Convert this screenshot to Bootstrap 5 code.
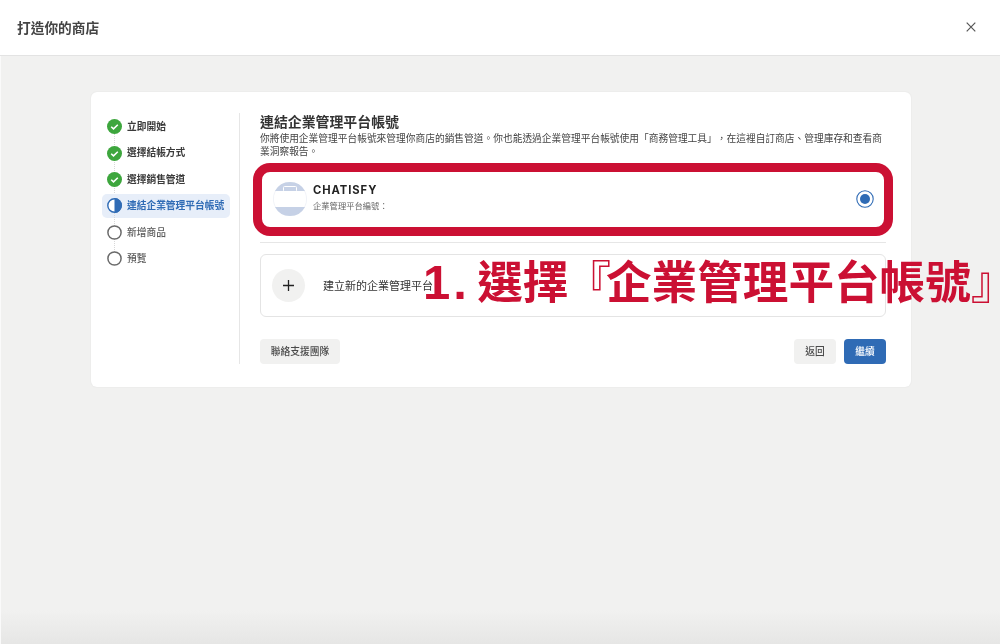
<!DOCTYPE html>
<html lang="zh-Hant">
<head>
<meta charset="utf-8">
<title>打造你的商店</title>
<link href="https://cdn.jsdelivr.net/npm/bootstrap@5.3.0/dist/css/bootstrap.min.css" rel="stylesheet">
<style>
html,body{height:644px;overflow:hidden}
body{font-family:"Noto Sans CJK TC","Liberation Sans",sans-serif;background:#f1f1f0;color:#1c1c1c;font-size:9.73px;line-height:13.5px;text-spacing-trim:space-all}
.page-shell{height:644px;padding-left:1px;background:linear-gradient(#f1f1f0 0,#f1f1f0 610px,#e6e6e5 644px);border-left:1px solid #fafafa;filter:blur(.3px)}
.top-bar{height:56px;background:#fff;border-bottom:1px solid #e3e3e3;margin-left:-2px;padding:0 22px 2px 17px}
.top-title{font-size:13.7px;font-weight:700;color:#444;margin:0;line-height:16px}
.close-x{width:14px;height:14px;display:block}
.store-panel{position:relative;width:820px;height:295px;margin:36px 0 0 89px;background:#fff;border-radius:6px;box-shadow:0 0 2px rgba(0,0,0,.07);padding:21px 25px 23px 11px}
.step-rail{width:138px;border-right:1px solid #e6e6e6;padding:.6px 9px 0 0;flex:none}
.step-item{position:relative;height:26.4px;padding-left:5px;gap:5px;font-weight:700;color:#3a3a3a}
.step-item:not(:last-child)::after{content:"";position:absolute;left:12px;top:20px;height:13px;border-left:1.5px dotted #d8d8d8}
.step-item.step-now{color:#2f6bb5}
.step-item.step-now::before{content:"";position:absolute;left:0;right:0;top:1.2px;bottom:1.2px;background:#e7eef9;border-radius:5px;z-index:0}
.step-item>*{position:relative;z-index:1}
.step-item.step-todo{color:#5a5a5a;font-weight:500}
.step-ico{width:15px;height:15px;flex:none;display:block}
.form-side{margin-left:20px;min-width:0}
.form-head{font-size:13.9px;line-height:16px;font-weight:700;margin:0 0 2.5px;color:#333}
.form-desc{margin:0;color:#444}
.biz-row{height:73px;margin-top:11.5px;border-bottom:1px solid #e6e6e6;padding:0 12px 14px 13px}
.biz-logo{width:34px;height:34px;flex:none;display:block;margin-right:6px}
.biz-text{padding-bottom:4.5px}
.biz-name{font-family:Inter,"Liberation Sans",sans-serif;font-weight:700;font-size:11.2px;line-height:15px;letter-spacing:.95px;color:#222}
.biz-sub{font-size:8.3px;line-height:12px;color:#666;margin-top:.5px}
.radio-ring{width:18px;height:18px;display:block}
.new-biz{height:63px;margin-top:11px;border:1px solid #e4e4e4;border-radius:6px;padding-left:11px}
.plus-disc{width:33px;height:33px;border-radius:50%;background:#f1f1f0;flex:none;margin-right:18px}
.plus-disc svg{display:block}
.new-label{font-size:11px;color:#333}
.foot-row{margin-top:22px}
.soft-btn,.main-btn{height:25px;border:0;border-radius:4px;font-size:9.73px;line-height:25px;padding:0;font-weight:500}
.soft-btn{background:#f1f1f0;color:#4a4a4a}
.main-btn{background:#2f6bb5;color:#fff}
.btn-wide{width:80px}
.btn-tiny{width:42px}
.callout-box{position:absolute;left:162px;top:71px;width:640px;height:73px;border:9px solid #cb1033;border-radius:17px;pointer-events:none}
.callout-text{position:absolute;left:332px;top:157px;font-size:45.6px;line-height:60px;font-weight:700;color:#cb1033;white-space:nowrap}
.callout-num{font-family:"Liberation Sans",sans-serif;font-size:49px;letter-spacing:3px;margin-right:-3px}
.callout-tight{letter-spacing:-3px}
.callout-open{font-weight:400;letter-spacing:-5px}
.callout-end{font-weight:400;letter-spacing:-25px}
</style>
</head>
<body>
<div class="page-shell">
  <header class="top-bar d-flex align-items-center justify-content-between">
    <h1 class="top-title">打造你的商店</h1>
    <svg class="close-x" viewBox="0 0 14 14" aria-label="關閉"><path d="M2.7 2.7l8.6 8.6M11.3 2.7l-8.6 8.6" stroke="#555" stroke-width="1.2" fill="none"/></svg>
  </header>
  <section class="store-panel d-flex">
    <nav class="step-rail">
      <div class="step-item d-flex align-items-center"><svg class="step-ico" viewBox="0 0 15 15"><circle cx="7.5" cy="7.5" r="7.5" fill="#3da63d"/><path d="M4.2 7.7l2.3 2.2 4.3-4.2" stroke="#fff" stroke-width="1.5" fill="none"/></svg><span>立即開始</span></div>
      <div class="step-item d-flex align-items-center"><svg class="step-ico" viewBox="0 0 15 15"><circle cx="7.5" cy="7.5" r="7.5" fill="#3da63d"/><path d="M4.2 7.7l2.3 2.2 4.3-4.2" stroke="#fff" stroke-width="1.5" fill="none"/></svg><span>選擇結帳方式</span></div>
      <div class="step-item d-flex align-items-center"><svg class="step-ico" viewBox="0 0 15 15"><circle cx="7.5" cy="7.5" r="7.5" fill="#3da63d"/><path d="M4.2 7.7l2.3 2.2 4.3-4.2" stroke="#fff" stroke-width="1.5" fill="none"/></svg><span>選擇銷售管道</span></div>
      <div class="step-item step-now d-flex align-items-center"><svg class="step-ico" viewBox="0 0 15 15"><circle cx="7.5" cy="7.5" r="6.7" fill="#fff" stroke="#2f6bb5" stroke-width="1.4"/><path d="M7.5 0a7.5 7.5 0 0 1 0 15z" fill="#2f6bb5"/></svg><span>連結企業管理平台帳號</span></div>
      <div class="step-item step-todo d-flex align-items-center"><svg class="step-ico" viewBox="0 0 15 15"><circle cx="7.5" cy="7.5" r="6.6" fill="#fff" stroke="#6b6b6b" stroke-width="1.5"/></svg><span>新增商品</span></div>
      <div class="step-item step-todo d-flex align-items-center"><svg class="step-ico" viewBox="0 0 15 15"><circle cx="7.5" cy="7.5" r="6.6" fill="#fff" stroke="#6b6b6b" stroke-width="1.5"/></svg><span>預覽</span></div>
    </nav>
    <div class="form-side flex-grow-1 d-flex flex-column">
      <h2 class="form-head">連結企業管理平台帳號</h2>
      <p class="form-desc">你將使用企業管理平台帳號來管理你商店的銷售管道。你也能透過企業管理平台帳號使用「商務管理工具」，在這裡自訂商店、管理庫存和查看商業洞察報告。</p>
      <div class="biz-row d-flex align-items-center">
        <svg class="biz-logo" viewBox="0 0 34 34"><circle cx="17" cy="17" r="16.6" fill="#fff" stroke="#edf0f6" stroke-width=".8"/><path d="M2 9a17 17 0 0 1 30 0zM2 25h30a17 17 0 0 1-30 0z" fill="#c6d1e6"/><rect x="10.5" y="4.5" width="13" height="5" rx="1" fill="none" stroke="#fff"/></svg>
        <div class="biz-text flex-grow-1">
          <div class="biz-name">CHATISFY</div>
          <div class="biz-sub">企業管理平台編號：</div>
        </div>
        <svg class="radio-ring" viewBox="0 0 18 18"><circle cx="9" cy="9" r="8.2" fill="#fff" stroke="#2f6bb5" stroke-width="1.1"/><circle cx="9" cy="9" r="5" fill="#2f6bb5"/></svg>
      </div>
      <div class="new-biz d-flex align-items-center">
        <div class="plus-disc d-flex align-items-center justify-content-center"><svg width="13" height="13" viewBox="0 0 13 13"><path d="M6.5 1v11M1 6.5h11" stroke="#222" stroke-width="1.3"/></svg></div>
        <span class="new-label">建立新的企業管理平台</span>
      </div>
      <div class="foot-row d-flex align-items-center justify-content-between">
        <button class="btn soft-btn btn-wide" type="button">聯絡支援團隊</button>
        <div class="d-flex gap-2">
          <button class="btn soft-btn btn-tiny" type="button">返回</button>
          <button class="btn main-btn btn-tiny" type="button">繼續</button>
        </div>
      </div>
    </div>
    <div class="callout-box"></div>
    <div class="callout-text"><span class="callout-num">1.</span> 選<span class="callout-tight">擇</span><span class="callout-open">『</span>企業管理平台帳號<span class="callout-end">』</span></div>
  </section>
</div>
<script src="https://cdn.jsdelivr.net/npm/bootstrap@5.3.0/dist/js/bootstrap.bundle.min.js"></script>
</body>
</html>
